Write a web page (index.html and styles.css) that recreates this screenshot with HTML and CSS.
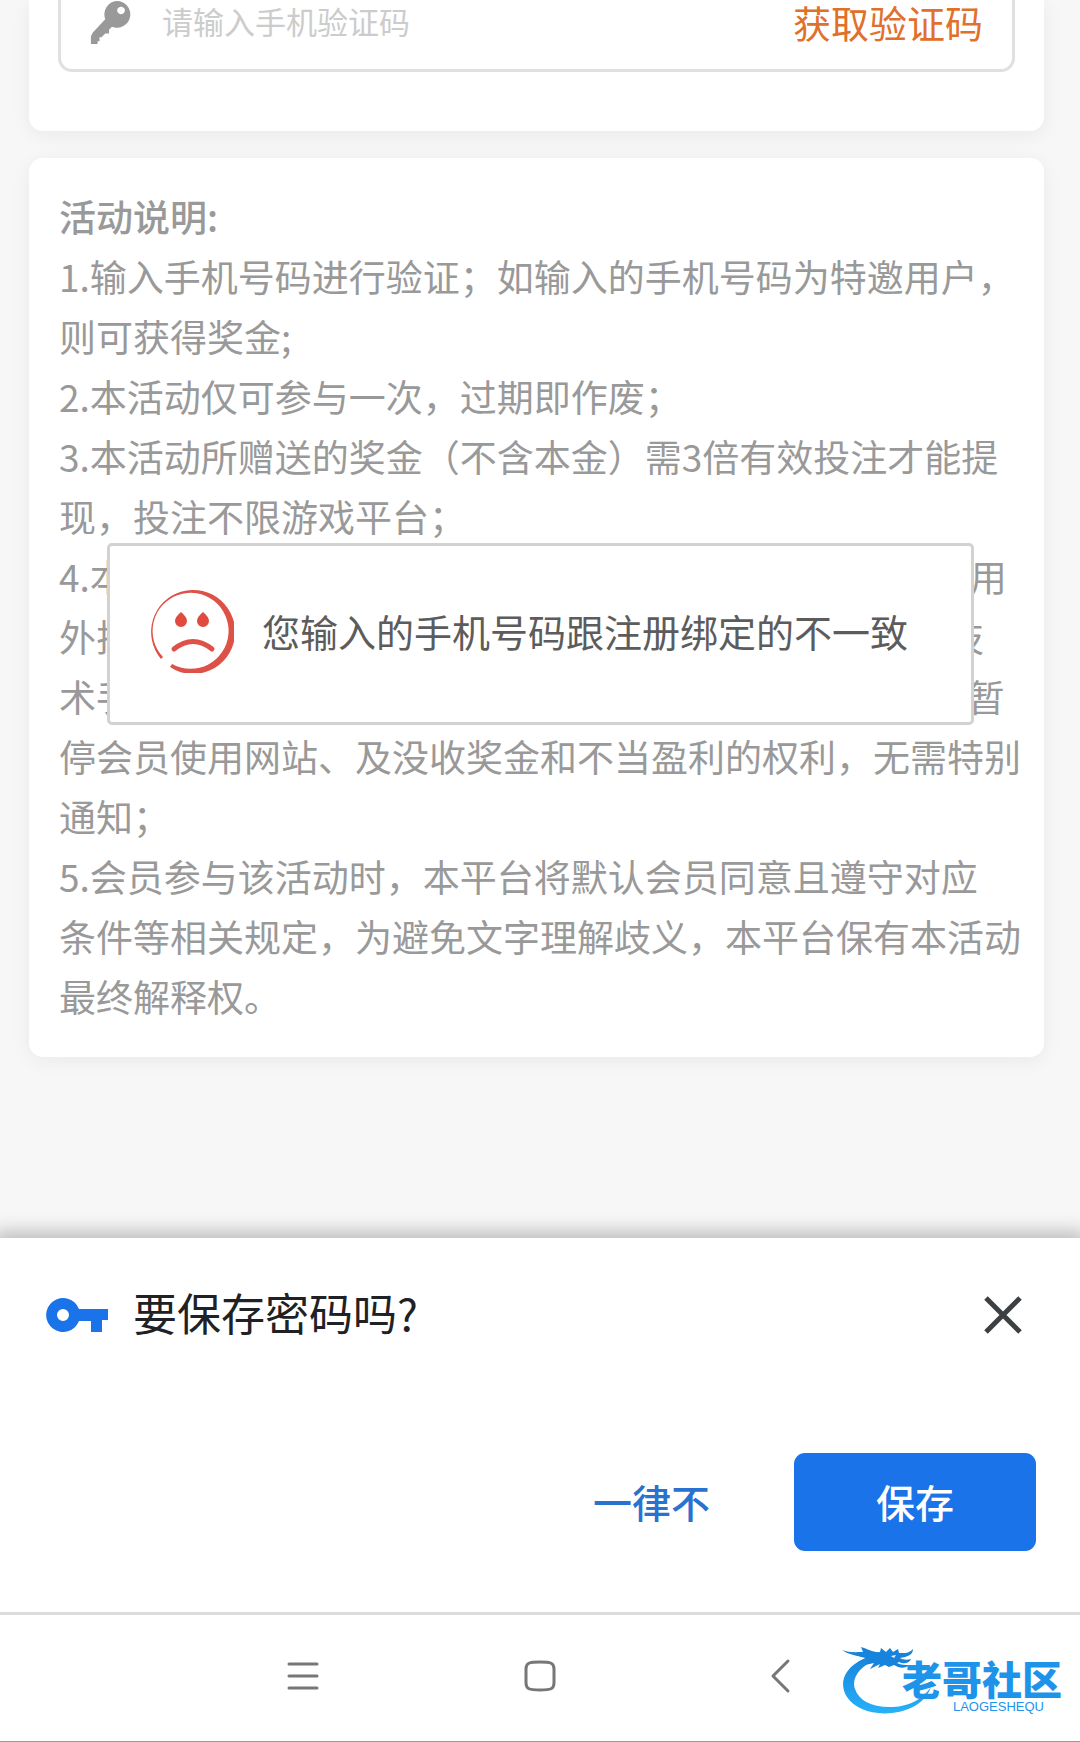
FILE: index.html
```html
<!DOCTYPE html>
<html lang="zh-CN">
<head>
  <meta charset="UTF-8" />
  <meta name="viewport" content="width=device-width, initial-scale=1.0" />
  <title>活动说明</title>
  <link rel="stylesheet" href="styles.css">
</head>
<body>
  <main>
    <form class="card verify">
      <div class="code-row">
        <svg class="code-key" viewBox="0 0 42 46" aria-hidden="true">
          <path fill="#999" fill-rule="evenodd" d="M27 1a14 14 0 1 1-5 27l-3 3v4h-4l-4 4h-2v4H7v3H0v-8l2-4 13-14A14 14 0 0 1 27 1zm4 6a4 4 0 1 0 1 0z"/>
        </svg>
        <input type="text" id="code" aria-label="手机验证码" placeholder="请输入手机验证码" />
        <button type="button" class="get-code">获取验证码</button>
      </div>
    </form>

    <section class="card rules">
      <h2>活动说明:</h2>
      <p>1.输入手机号码进行验证；如输入的手机号码为特邀用户，<br>则可获得奖金;</p>
      <p>2.本活动仅可参与一次，过期即作废；</p>
      <p>3.本活动所赠送的奖金（不含本金）需3倍有效投注才能提<br>现，投注不限游戏平台；</p>
      <p>4.本活动每位会员仅限参加 1次，一旦发现有任何会员使用<br>外挂程序或者利用平台漏洞等，以及通过其他不正当的技<br>术手段获取奖金，本平台有权在7天内不经通知即冻结或暂<br>停会员使用网站、及没收奖金和不当盈利的权利，无需特别<br>通知；</p>
      <p>5.会员参与该活动时，本平台将默认会员同意且遵守对应<br>条件等相关规定，为避免文字理解歧义，本平台保有本活动<br>最终解释权。</p>
    </section>
  </main>

  <div class="toast" role="alert">
    <svg class="sad-face" viewBox="0 0 84 84" aria-hidden="true">
      <path fill="#dd5147" d="M11 70A42 42 0 1 1 20 78L22 75A38 38 0 1 0 13 68z"/>
      <path fill="#e04a3f" d="M31 23q6 5 6 9a6 6 0 0 1-12 0q0-4 6-9zM53 23q6 5 6 9a6 6 0 0 1-12 0q0-4 6-9z"/>
      <path fill="none" stroke="#dd5147" stroke-width="5" stroke-linecap="round" d="M24 60q19-15 38 0"/>
    </svg>
    <span>您输入的手机号码跟注册绑定的不一致</span>
  </div>

  <section class="sheet">
    <div class="sheet-head">
      <svg class="sheet-key" viewBox="0 0 62 34" aria-hidden="true">
        <path fill="#1a73e8" fill-rule="evenodd" d="M33 11H62V22H56V34H45V23H33A17 17 0 1 1 33 11zM17 11a6 6 0 1 0 0 12 6 6 0 1 0 0-12z"/>
      </svg>
      <h2>要保存密码吗?</h2>
      <button type="button" class="close" aria-label="关闭">
        <svg viewBox="0 0 38 38"><path fill="none" stroke="#3c4043" stroke-width="5" d="M2 2l34 34M36 2L2 36"/></svg>
      </button>
    </div>
    <div class="sheet-actions">
      <button type="button" class="never">一律不</button>
      <button type="button" class="save">保存</button>
    </div>
  </section>

  <nav>
    <button type="button" aria-label="菜单">
      <svg viewBox="0 0 48 48"><path d="M11 12h28M11 24h28M11 36h28"/></svg>
    </button>
    <button type="button" aria-label="主页">
      <svg viewBox="0 0 48 48"><path d="M24 10c11 0 14 1 14 7v14c0 6-3 7-14 7s-14-1-14-7V17c0-6 3-7 14-7z"/></svg>
    </button>
    <button type="button" aria-label="返回">
      <svg viewBox="0 0 48 48"><path d="M34 9L19 24l15 15"/></svg>
    </button>

    <div class="logo">
      <svg class="dragon" viewBox="0 0 92 72" aria-hidden="true">
        <defs>
          <linearGradient id="blue" x1="0" y1="0" x2="0" y2="1">
            <stop offset="0" stop-color="#1683dc"/>
            <stop offset="1" stop-color="#27b1f8"/>
          </linearGradient>
        </defs>
        <path fill="url(#blue)" d="M34 10C8 16-5 35 6 52c8 12 25 18 45 16 18-2 33-10 39-26-9 13-22 19-38 20-20 1-34-6-38-18-4-11 5-23 22-30z"/>
        <path fill="#1683dc" d="M1 5c7 3 15 2 21 2L20 2c7 2 13 6 19 5l1-4 5 4 4-4 3 4 5-3 1 4c5 0 9 1 14-4 0 5-4 7-8 8l-5 1c3 2 7 2 11 1-2 5-8 5-12 3l-2 1c4 2 8 2 12 2-4 4-10 3-15 0l-5 2-4-2-7 3 2-4-10 5 4-6-9 2 5-6-9-2C14 10 6 9 1 5z"/>
        <path fill="#fff" d="M50 11l5-1-2 3z"/>
      </svg>
      <strong>老哥社区</strong>
      <small>LAOGESHEQU</small>
    </div>
  </nav>
</body>
</html>
```
FILE: styles.css
```css
* { box-sizing: border-box; }
body { display: flex; flex-direction: column; min-height: 100vh; margin: 0; position: relative; background: #f7f7f7; color: #999; font-family: "Noto Sans CJK SC", sans-serif; }
h2, p { margin: 0; }
button { padding: 0; border: 0; background: none; font-family: inherit; cursor: pointer; }
svg { display: block; }

main { padding: 0 36px 0 29px; }
.card { background: #fff; border-radius: 14px; box-shadow: 0 4px 20px rgba(0, 0, 0, 0.06); }

.verify { margin-bottom: 27px; padding: 0 29px 59px; border-top-left-radius: 0; border-top-right-radius: 0; }
.code-row { display: flex; align-items: center; padding: 0 29px 25px; border: 3px solid #e0e0e0; border-top: 0; border-radius: 0 0 14px 14px; }
.code-key { width: 42px; height: 44px; }
.code-row input { flex: 1; min-width: 0; height: 44px; margin-left: 30px; padding: 0 0 4px; border: 0; outline: 0; background: none; font-family: inherit; font-size: 31px; color: #666; }
.code-row input::placeholder { color: #ccc; }
.get-code { font-size: 38px; line-height: 44px; color: #e0702a; }

.rules { padding: 28px 0 31px 30px; font-size: 37px; line-height: 60px; white-space: nowrap; }
.rules h2 { font-size: 37px; font-weight: 500; }

.toast { position: absolute; top: 543px; left: 107px; right: 106px; display: flex; align-items: center; gap: 28px; padding: 43px 40px 49px; border: 3px solid #d2d2d2; border-radius: 5px; background: #fff; color: #5c5c5c; font-size: 38px; line-height: 60px; white-space: nowrap; }
.sad-face { flex: none; width: 84px; height: 84px; }

.sheet { margin-top: auto; padding: 44px 44px 61px 46px; border-bottom: 3px solid #dcdcdc; background: #fff; box-shadow: 0 0 18px 6px rgba(0, 0, 0, 0.25); }
.sheet-head { display: flex; align-items: center; margin-bottom: 105px; }
.sheet-key { width: 62px; height: 34px; }
.sheet-head h2 { flex: 1; margin-left: 25px; padding-bottom: 6px; font-size: 44px; font-weight: 400; line-height: 60px; color: #202124; }
.close { padding: 14px; }
.close svg { width: 38px; height: 38px; }
.sheet-actions { display: flex; justify-content: flex-end; gap: 84px; }
.sheet-actions button { padding-top: 19px; padding-bottom: 21px; font-size: 39px; font-weight: 500; line-height: 58px; }
.never { color: #2a72cf; }
.save { padding: 0 82px; border-radius: 11px; background: #1a73e8; color: #fff; }

nav { position: relative; z-index: 1; display: flex; justify-content: center; gap: 190px; padding: 37px 0 41px; border-bottom: 1px solid #999; background: #fff; }
nav button svg { width: 48px; height: 48px; fill: none; stroke: #777; stroke-width: 3; stroke-linecap: round; stroke-linejoin: round; }

.logo { position: absolute; right: 18px; bottom: 24px; display: flex; flex-direction: column; align-items: flex-end; width: 221px; height: 72px; padding-top: 13px; color: #1d94ea; }
.dragon { position: absolute; top: 0; left: 0; width: 92px; height: 72px; }
.logo strong { position: relative; font-size: 40px; font-weight: 900; line-height: 40px; }
.logo small { margin-right: 18px; font-family: "Liberation Sans", sans-serif; font-size: 13px; line-height: 18px; }
```
